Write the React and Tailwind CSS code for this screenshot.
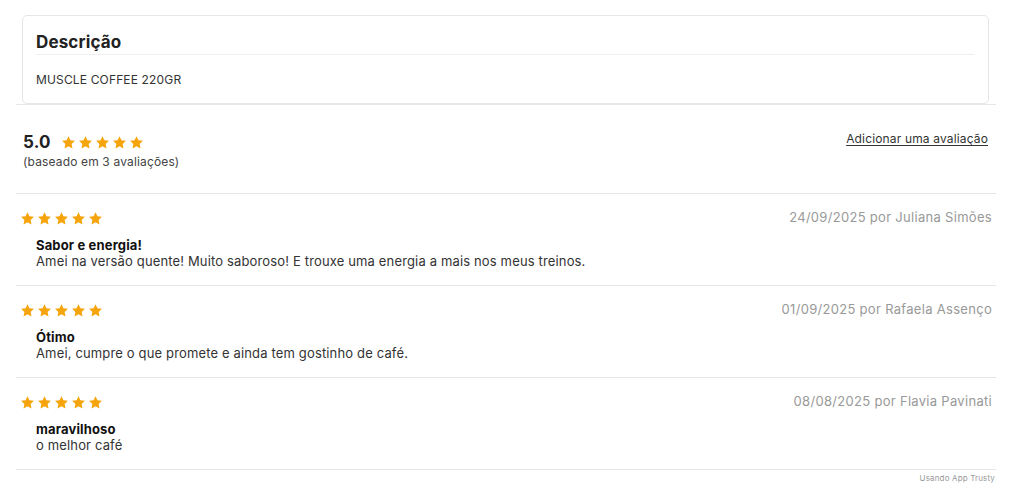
const reviews = [
  {
    date: '24/09/2025',
    author: 'Juliana Simões',
    title: 'Sabor e energia!',
    body: 'Amei na versão quente! Muito saboroso! E trouxe uma energia a mais nos meus treinos.',
  },
  {
    date: '01/09/2025',
    author: 'Rafaela Assenço',
    title: 'Ótimo',
    body: 'Amei, cumpre o que promete e ainda tem gostinho de café.',
  },
  {
    date: '08/08/2025',
    author: 'Flavia Pavinati',
    title: 'maravilhoso',
    body: 'o melhor café',
  },
]

function Star() {
  return (
    <svg viewBox="0 0 24 24" className="w-[15px] h-[15px] fill-[#f5a50b]">
      <path d="M12 1.8l3.1 6.6 7.2.9-5.3 5 1.4 7.1L12 17.9l-6.4 3.5 1.4-7.1-5.3-5 7.2-.9z" />
    </svg>
  )
}

function Stars() {
  return (
    <div className="flex gap-[2px]">
      {[0, 1, 2, 3, 4].map(i => <Star key={i} />)}
    </div>
  )
}

export default function App() {
  return (
    <div className="bg-white w-[1024px] h-[502px] pt-[15px] pl-4 font-['Inter',sans-serif] tracking-[0.15px] text-[#222]">
      <div className="w-[980px]">
        <div className="mx-[6px] w-[967px] border border-[#e6e6e6] rounded-[5px] px-[13px] pt-[16px] pb-[15px]">
          <h2 className="text-[17px] font-bold leading-[20px] text-[#222] pb-[2px] border-b border-[#efefef] mr-[1px]">
            Descrição
          </h2>
          <p className="text-[12px] text-[#333] mt-[17px] leading-[16px]">MUSCLE COFFEE 220GR</p>
        </div>
        <div className="border-t border-[#e6e6e6]" />

        <div className="flex justify-between items-start px-[7px] pt-[26px] h-[89px] border-b border-[#e6e6e6]">
          <div>
            <div className="flex items-center gap-[10px]">
              <span className="text-[17px] font-bold leading-[22px]">5.0</span>
              <Stars />
            </div>
            <p className="text-[12px] text-[#444] leading-[16px] mt-[1px]">(baseado em 3 avaliações)</p>
          </div>
          <a href="#" className="text-[12px] text-[#333] underline underline-offset-2 leading-[16px] mt-0 mr-[1px]">
            Adicionar uma avaliação
          </a>
        </div>

        {reviews.map((r, i) => (
          <div key={i} className="h-[92px] border-b border-[#e6e6e6] px-[4px] pt-[16px]">
            <div className="flex justify-between items-center h-[16px]">
              <Stars />
              <span className="text-[13px] text-[#999] tracking-[0.3px]">{r.date} por {r.author}</span>
            </div>
            <div className="pl-[16px] mt-[11px]">
              <p className="text-[13px] font-bold leading-[16px] text-[#111]">{r.title}</p>
              <p className="text-[13px] leading-[17px] text-[#333]">{r.body}</p>
            </div>
          </div>
        ))}

        <p className="text-right text-[8px] text-[#999] mt-[2px] pr-[1px]">Usando App Trusty</p>
      </div>
    </div>
  )
}
